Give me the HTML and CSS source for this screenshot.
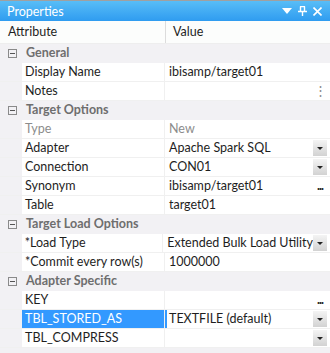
FILE: index.html
```html
<!DOCTYPE html>
<html lang="en">
<head>
    <meta charset="UTF-8">
    <title>Properties</title>
    <link rel="stylesheet" href="styles.css">
</head>
<body>
    <div class="panel">
        <div class="titlebar">
            <span class="title">Properties</span>
            <span class="tools">
                <svg width="10" height="6" viewBox="0 0 10 6"><path d="M0 0h10L5 6z" fill="#fff"/></svg>
                <svg width="9" height="10" viewBox="0 0 9 10"><path d="M2 0.5h5M2.5 0.5v5M6.5 0.5v5M0 5.5h9M4.5 5.5v4.5" stroke="#fff" stroke-width="1.4" fill="none"/></svg>
                <svg width="9" height="9" viewBox="0 0 9 9"><path d="M0.5 0.5l8 8M8.5 0.5l-8 8" stroke="#fff" stroke-width="1.6"/></svg>
            </span>
        </div>

        <div class="header">
            <div class="h-attr">Attribute</div>
            <div class="h-value">Value</div>
        </div>

        <div class="group"><span class="toggle"></span>General</div>
        <div class="row"><div class="gutter"></div><div class="attr">Display Name</div><div class="value">ibisamp/target01</div></div>
        <div class="row"><div class="gutter"></div><div class="attr">Notes</div><div class="value"><span class="text"></span><span class="more">&#8942;</span></div></div>

        <div class="group"><span class="toggle"></span>Target Options</div>
        <div class="row disabled"><div class="gutter"></div><div class="attr">Type</div><div class="value">New</div></div>
        <div class="row"><div class="gutter"></div><div class="attr">Adapter</div><div class="value"><span class="text">Apache Spark SQL</span><span class="drop"></span></div></div>
        <div class="row"><div class="gutter"></div><div class="attr">Connection</div><div class="value"><span class="text">CON01</span><span class="drop"></span></div></div>
        <div class="row"><div class="gutter"></div><div class="attr">Synonym</div><div class="value"><span class="text">ibisamp/target01</span><span class="dots">...</span></div></div>
        <div class="row"><div class="gutter"></div><div class="attr">Table</div><div class="value">target01</div></div>

        <div class="group"><span class="toggle"></span>Target Load Options</div>
        <div class="row"><div class="gutter"></div><div class="attr">*Load Type</div><div class="value"><span class="text">Extended Bulk Load Utility</span><span class="drop"></span></div></div>
        <div class="row"><div class="gutter"></div><div class="attr">*Commit every row(s)</div><div class="value">1000000</div></div>

        <div class="group"><span class="toggle"></span>Adapter Specific</div>
        <div class="row"><div class="gutter"></div><div class="attr">KEY</div><div class="value"><span class="text"></span><span class="dots">...</span></div></div>
        <div class="row selected"><div class="gutter"></div><div class="attr">TBL_STORED_AS</div><div class="value"><span class="text">TEXTFILE (default)</span><span class="drop"></span></div></div>
        <div class="row"><div class="gutter"></div><div class="attr">TBL_COMPRESS</div><div class="value"><span class="text"></span><span class="drop"></span></div></div>
    </div>
</body>
</html>
```

FILE: styles.css
```css
body {
    margin: 0;
    font-family: Lato, "Noto Sans", sans-serif;
    font-size: 12.5px;
    color: #1e1e1e;
    white-space: nowrap;
}
.panel {
    width: 330px;
    height: 353px;
    background: #f2f1f4;
    overflow: hidden;
}
.titlebar {
    height: 20px;
    border-top: 1px solid #a0a0a0;
    background: linear-gradient(#58bdf7, #2f9cf0);
    color: #fff;
    display: flex;
    align-items: center;
    justify-content: space-between;
    padding: 0 8px 0 7px;
}
.tools {
    display: flex;
    align-items: center;
    gap: 6px;
}
.tools svg {
    display: block;
}
.header {
    height: 22px;
    display: flex;
    background: #fcfdfc;
    border-bottom: 1px solid #eeeeee;
}
.h-attr {
    width: 157px;
    padding-left: 8px;
    line-height: 22px;
    border-right: 1px solid #dcdcdc;
}
.h-value {
    padding-left: 7px;
    line-height: 22px;
}
.group {
    height: 18px;
    line-height: 18px;
    font-weight: bold;
    color: #6e6e6e;
    display: flex;
    align-items: center;
    border-bottom: 1px solid #f2f1f4;
}
.toggle {
    width: 7px;
    height: 7px;
    border: 1px solid #8a8a8a;
    margin: 0 9px 0 8px;
    position: relative;
}
.toggle::after {
    content: "";
    position: absolute;
    left: 1px;
    top: 3px;
    width: 5px;
    height: 1px;
    background: #555;
}
.row {
    height: 18px;
    display: flex;
    border-bottom: 1px solid #f0f0f0;
}
.gutter {
    width: 22px;
    background: #f2f1f4;
}
.attr {
    width: 139px;
    padding-left: 3px;
    line-height: 18px;
    background: #fff;
    border-right: 1px solid #f0f0f0;
}
.value {
    flex: 1;
    display: flex;
    align-items: center;
    padding-left: 4px;
    background: #fff;
    line-height: 18px;
}
.value .text {
    flex: 1;
}
.disabled .attr,
.disabled .value {
    color: #8c8c8c;
}
.selected .attr {
    background: #3399ff;
    color: #fff;
}
.selected .value {
    box-shadow: inset 2px 0 0 #3399ff;
}
.drop {
    width: 14px;
    height: 16px;
    margin-right: 3px;
    background: linear-gradient(#f4f4f4, #d2d2d2);
    position: relative;
}
.drop::after {
    content: "";
    position: absolute;
    left: 4px;
    top: 7px;
    border-left: 3px solid transparent;
    border-right: 3px solid transparent;
    border-top: 3px solid #222;
}
.dots {
    width: 14px;
    margin-right: 3px;
    text-align: center;
    line-height: 12px;
    font-weight: bold;
    letter-spacing: -1px;
}
.more {
    width: 14px;
    margin-right: 3px;
    text-align: center;
    color: #8a8a8a;
}
```
